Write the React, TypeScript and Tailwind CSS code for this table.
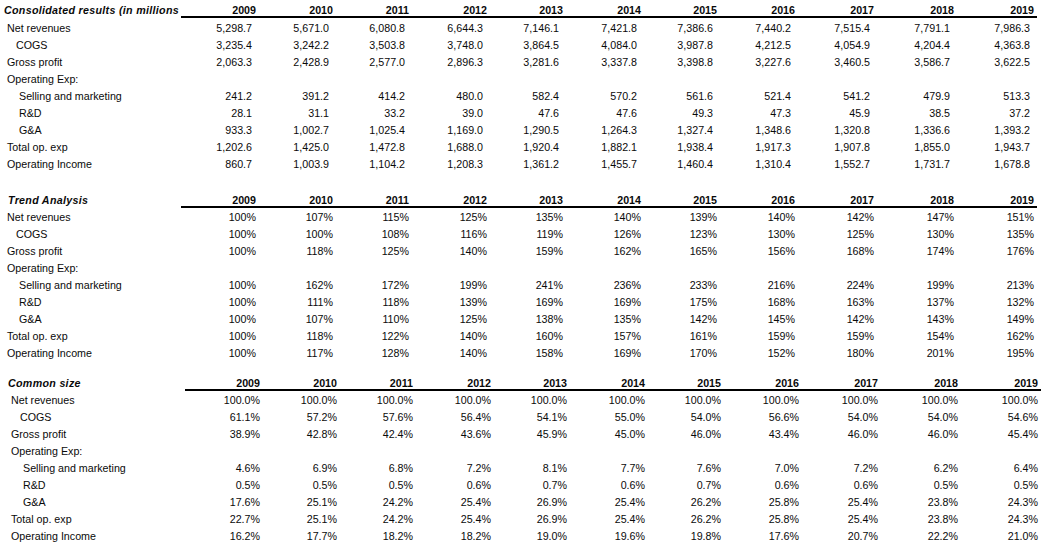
const years = ["2009", "2010", "2011", "2012", "2013", "2014", "2015", "2016", "2017", "2018", "2019"];

type Row = { label: string; indent?: 0 | 1 | 2; values?: string[] };

const labels: { label: string; indent: 0 | 1 | 2 }[] = [
  { label: "Net revenues", indent: 0 },
  { label: "COGS", indent: 1 },
  { label: "Gross profit", indent: 0 },
  { label: "Operating Exp:", indent: 0 },
  { label: "Selling and marketing", indent: 2 },
  { label: "R&D", indent: 2 },
  { label: "G&A", indent: 2 },
  { label: "Total op. exp", indent: 0 },
  { label: "Operating Income", indent: 0 },
];

function build(data: (string | null)[]): Row[] {
  return labels.map((l, i) => ({
    ...l,
    values: data[i] ? (data[i] as string).split(" ") : undefined,
  }));
}

const consolidated = build([
  "5,298.7 5,671.0 6,080.8 6,644.3 7,146.1 7,421.8 7,386.6 7,440.2 7,515.4 7,791.1 7,986.3",
  "3,235.4 3,242.2 3,503.8 3,748.0 3,864.5 4,084.0 3,987.8 4,212.5 4,054.9 4,204.4 4,363.8",
  "2,063.3 2,428.9 2,577.0 2,896.3 3,281.6 3,337.8 3,398.8 3,227.6 3,460.5 3,586.7 3,622.5",
  null,
  "241.2 391.2 414.2 480.0 582.4 570.2 561.6 521.4 541.2 479.9 513.3",
  "28.1 31.1 33.2 39.0 47.6 47.6 49.3 47.3 45.9 38.5 37.2",
  "933.3 1,002.7 1,025.4 1,169.0 1,290.5 1,264.3 1,327.4 1,348.6 1,320.8 1,336.6 1,393.2",
  "1,202.6 1,425.0 1,472.8 1,688.0 1,920.4 1,882.1 1,938.4 1,917.3 1,907.8 1,855.0 1,943.7",
  "860.7 1,003.9 1,104.2 1,208.3 1,361.2 1,455.7 1,460.4 1,310.4 1,552.7 1,731.7 1,678.8",
]);

const trend = build([
  "100% 107% 115% 125% 135% 140% 139% 140% 142% 147% 151%",
  "100% 100% 108% 116% 119% 126% 123% 130% 125% 130% 135%",
  "100% 118% 125% 140% 159% 162% 165% 156% 168% 174% 176%",
  null,
  "100% 162% 172% 199% 241% 236% 233% 216% 224% 199% 213%",
  "100% 111% 118% 139% 169% 169% 175% 168% 163% 137% 132%",
  "100% 107% 110% 125% 138% 135% 142% 145% 142% 143% 149%",
  "100% 118% 122% 140% 160% 157% 161% 159% 159% 154% 162%",
  "100% 117% 128% 140% 158% 169% 170% 152% 180% 201% 195%",
]);

const common = build([
  "100.0% 100.0% 100.0% 100.0% 100.0% 100.0% 100.0% 100.0% 100.0% 100.0% 100.0%",
  "61.1% 57.2% 57.6% 56.4% 54.1% 55.0% 54.0% 56.6% 54.0% 54.0% 54.6%",
  "38.9% 42.8% 42.4% 43.6% 45.9% 45.0% 46.0% 43.4% 46.0% 46.0% 45.4%",
  null,
  "4.6% 6.9% 6.8% 7.2% 8.1% 7.7% 7.6% 7.0% 7.2% 6.2% 6.4%",
  "0.5% 0.5% 0.5% 0.6% 0.7% 0.6% 0.7% 0.6% 0.6% 0.5% 0.5%",
  "17.6% 25.1% 24.2% 25.4% 26.9% 25.4% 26.2% 25.8% 25.4% 23.8% 24.3%",
  "22.7% 25.1% 24.2% 25.4% 26.9% 25.4% 26.2% 25.8% 25.4% 23.8% 24.3%",
  "16.2% 17.7% 18.2% 18.2% 19.0% 19.6% 19.8% 17.6% 20.7% 22.2% 21.0%",
]);

const grid =
  "grid grid-cols-[181px_78px_77px_76px_78px_76px_78px_76px_78px_79px_80px_80px]";

const indentClass = ["pl-[7px]", "pl-[16px]", "pl-[19px]"];

function Section({
  title,
  rows,
  accounting,
  className,
  titleClass,
  bodyClass,
}: {
  title: string;
  rows: Row[];
  accounting?: boolean;
  className: string;
  titleClass: string;
  bodyClass: string;
}) {
  return (
    <div className={className}>
      {/* header row with years */}
      <div className={`${grid} h-[18px]`}>
        <div className={`flex items-end pb-[2px] leading-[11px] font-bold italic tracking-[0.3px] whitespace-nowrap ${titleClass}`}>
          {title}
        </div>
        {years.map((y) => (
          <div
            key={y}
            className="flex items-end justify-end pr-[3px] leading-[11px] font-bold border-b-2 border-black"
          >
            {y}
          </div>
        ))}
      </div>

      <div className={bodyClass}>
        {rows.map((r) => (
          <div key={r.label} className={`${grid} h-[17px] leading-[17px]`}>
            <div className={`whitespace-nowrap ${indentClass[r.indent ?? 0]}`}>{r.label}</div>
            {years.map((y, i) => (
              <div
                key={y}
                className={`text-right whitespace-nowrap ${accounting ? "pr-[7px]" : "pr-[3px]"}`}
              >
                {r.values ? r.values[i] : ""}
              </div>
            ))}
          </div>
        ))}
      </div>
    </div>
  );
}

export default function App() {
  return (
    <div className="w-[1054px] h-[555px] overflow-hidden bg-white text-[#0a0a0a] text-[10.7px] font-['Liberation_Sans',Arial,sans-serif]">
      <Section
        title="Consolidated results (in millions"
        rows={consolidated}
        accounting
        className=""
        titleClass="pl-[4px]"
        bodyClass="mt-[2px]"
      />
      <Section
        title="Trend Analysis"
        rows={trend}
        className="mt-[17px]"
        titleClass="pl-[8px]"
        bodyClass="mt-[1px]"
      />
      <Section
        title="Common size"
        rows={common}
        className="mt-[11px] pl-[4px]"
        titleClass="pl-[4px]"
        bodyClass="mt-[1px]"
      />
    </div>
  );
}
